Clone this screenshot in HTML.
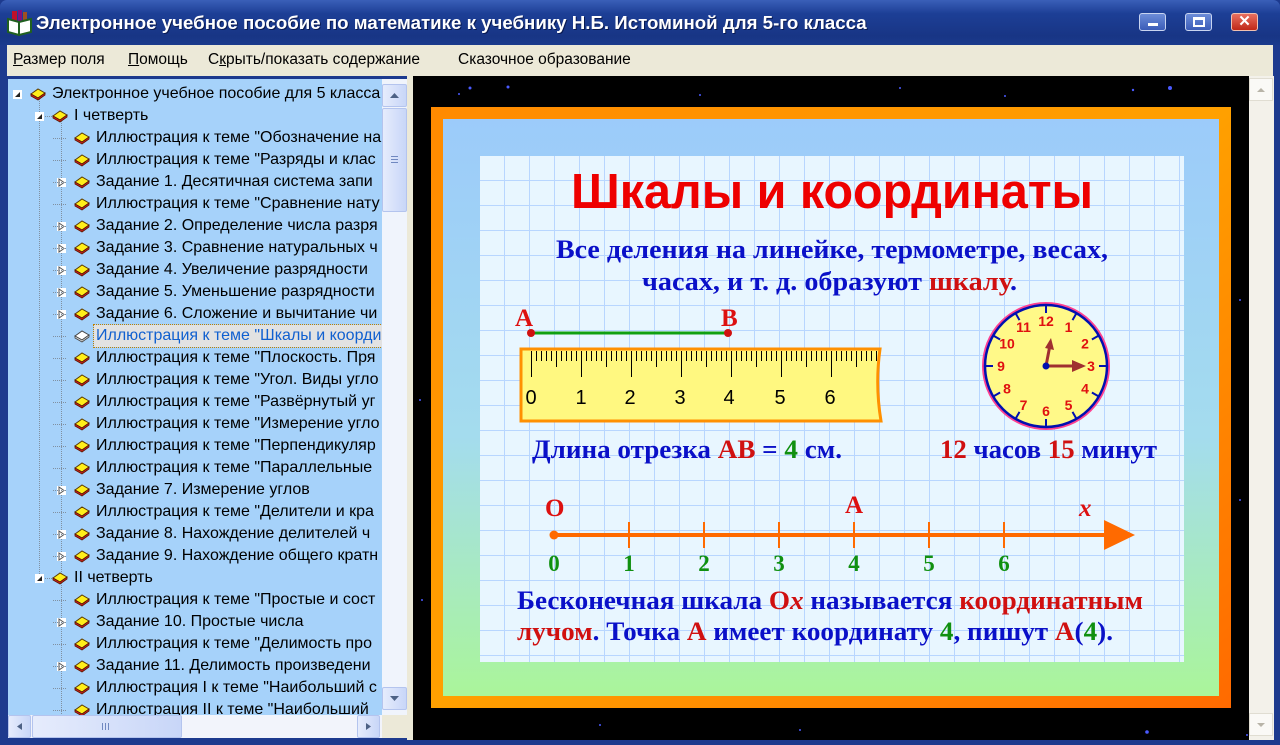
<!DOCTYPE html>
<html><head><meta charset="utf-8">
<style>
*{margin:0;padding:0;box-sizing:border-box}
body{width:1280px;height:745px;overflow:hidden;background:#1d3a8e;font-family:"Liberation Sans",sans-serif;position:relative}
.abs{position:absolute}
#title{left:0;top:0;width:1280px;height:45px;background:linear-gradient(#3a5fb8,#1d3f96 30%,#183585 80%,#1a3a8c);border-radius:7px 7px 0 0}
#title .t{left:36px;top:12px;color:#fff;font-weight:bold;font-size:18.7px;white-space:nowrap;text-shadow:1px 1px 0 #0a1a50}
.btn{top:13px;width:27px;height:18px;border:1px solid #c8d4f0;border-radius:3px;background:linear-gradient(#6c8cd8,#3b5cb8)}
#menu{left:7px;top:45px;width:1266px;height:31px;background:#ece9d8}
#menu span{position:absolute;top:6px;font-size:15.5px;color:#000}
#tree{left:8px;top:79px;width:374px;height:636px;background:#a6d2fa;overflow:hidden}
.r{position:absolute;height:22px;font-size:16px;white-space:nowrap;color:#000;line-height:22px}
.bk{position:absolute}
.ex{position:absolute;width:9px;height:9px;background:#fff;font-size:8px;line-height:9px;text-align:center;color:#333}
#vs{left:382px;top:79px;width:25px;height:636px;background:#f0f4fc}
#hs{left:8px;top:715px;width:399px;height:23px;background:#f2f4fb}
.sb{position:absolute;background:linear-gradient(90deg,#e6ecfc,#c8d6f8);border:1px solid #b4c4ee;border-radius:2px}
#split{left:407px;top:76px;width:6px;height:664px;background:#ece9d8}
#black{left:413px;top:76px;width:836px;height:664px;background:#000}
#rs{left:1249px;top:76px;width:25px;height:664px;background:#f3f1ea}
</style></head><body>
<div id="title" class="abs">
 <svg class="abs" style="left:7px;top:10px" width="26" height="26"><rect x="5" y="1" width="5" height="14" fill="#c0102a"/><rect x="11" y="0" width="4" height="15" fill="#801080"/><rect x="16" y="2" width="4" height="13" fill="#a05020"/><path d="M1 9 L12 12 L12 25 L1 22Z" fill="#fff" stroke="#206020" stroke-width="2"/><path d="M12 12 L24 9 L24 22 L12 25Z" fill="#fff" stroke="#206020" stroke-width="2"/></svg>
 <div class="abs t">Электронное учебное пособие по математике к учебнику Н.Б. Истоминой для 5-го класса</div>
 <div class="abs btn" style="left:1139px"><div class="abs" style="left:8px;top:9px;width:10px;height:3px;background:#fff"></div></div>
 <div class="abs btn" style="left:1185px"><div class="abs" style="left:7px;top:3px;width:12px;height:10px;border:2px solid #fff;border-top-width:3px"></div></div>
 <div class="abs btn" style="left:1231px;background:linear-gradient(#e87060,#c02818);border-color:#f0c0b0;color:#fff;font-weight:bold;font-size:15px;text-align:center;line-height:16px">✕</div>
</div>
<div id="menu" class="abs">
 <span style="left:6px"><u>Р</u>азмер поля</span>
 <span style="left:121px"><u>П</u>омощь</span>
 <span style="left:201px">С<u>к</u>рыть/показать содержание</span>
 <span style="left:451px">Сказочное образование</span>
</div>
<div id="tree" class="abs">
<svg class="abs" style="left:0;top:0" width="374" height="636">
<g stroke="#8090a0" stroke-dasharray="1 1" stroke-width="1">
<line x1="31.5" y1="20" x2="31.5" y2="500"/>
<line x1="53.5" y1="42" x2="53.5" y2="636"/>
<line x1="37" y1="37.5" x2="46" y2="37.5"/>
<line x1="37" y1="499.5" x2="46" y2="499.5"/>
</g></svg>
<div id="rows"></div>
</div>
<div id="vs" class="abs">
 <div class="sb" style="left:0;top:5px;width:25px;height:23px"><svg width="23" height="21"><path d="M7 13 L11.5 8 L16 13Z" fill="#4d6185"/></svg></div>
 <div class="sb" style="left:0;top:29px;width:25px;height:104px"><svg width="23" height="102"><g stroke="#7088c0"><line x1="8" y1="47.5" x2="15" y2="47.5"/><line x1="8" y1="50.5" x2="15" y2="50.5"/><line x1="8" y1="53.5" x2="15" y2="53.5"/></g></svg></div>
 <div class="sb" style="left:0;top:608px;width:25px;height:23px"><svg width="23" height="21"><path d="M7 8 L11.5 13 L16 8Z" fill="#4d6185"/></svg></div>
</div>
<div id="hs" class="abs">
 <div class="sb" style="left:0;top:0;width:23px;height:23px"><svg width="21" height="21"><path d="M13 7 L8 10.5 L13 14Z" fill="#4d6185"/></svg></div>
 <div class="sb" style="left:24px;top:0;width:150px;height:23px"><svg width="148" height="21"><g stroke="#7088c0"><line x1="69.5" y1="7" x2="69.5" y2="14"/><line x1="72.5" y1="7" x2="72.5" y2="14"/><line x1="75.5" y1="7" x2="75.5" y2="14"/></g></svg></div>
 <div class="sb" style="left:349px;top:0;width:23px;height:23px"><svg width="21" height="21"><path d="M8 7 L13 10.5 L8 14Z" fill="#4d6185"/></svg></div>
 <div class="abs" style="left:374px;top:0;width:25px;height:23px;background:#ece9d8"></div>
</div>
<div id="split" class="abs"></div>
<div id="black" class="abs"></div>
<div id="rs" class="abs">
 <div class="abs" style="left:0;top:2px;width:24px;height:23px;background:#faf9f6;border:1px solid #e0ddd2"><svg width="22" height="21"><path d="M7 13 L11 9 L15 13Z" fill="#b8b4a8"/></svg></div>
 <div class="abs" style="left:0;top:637px;width:24px;height:23px;background:#faf9f6;border:1px solid #e0ddd2"><svg width="22" height="21"><path d="M7 9 L11 13 L15 9Z" fill="#b8b4a8"/></svg></div>
</div>

<svg class="abs" style="left:0;top:0" width="1280" height="745">
<defs>
<linearGradient id="inner" x1="0" y1="0" x2="0" y2="1"><stop offset="0" stop-color="#9ccbfa"/><stop offset="0.55" stop-color="#a4dcee"/><stop offset="1" stop-color="#aaf59a"/></linearGradient>
<linearGradient id="og" x1="0" y1="0" x2="1" y2="1"><stop offset="0" stop-color="#ff8a00"/><stop offset="0.5" stop-color="#ffa000"/><stop offset="1" stop-color="#ff6a00"/></linearGradient>
<pattern id="grid" x="480" y="156" width="25" height="25" patternUnits="userSpaceOnUse"><rect width="25" height="25" fill="#e8f6ff"/><rect x="24" y="0" width="2" height="25" fill="#b8d6ff"/><rect x="0" y="24" width="25" height="2" fill="#b8d6ff"/></pattern>
</defs>
<g fill="#4a5aff">
<circle cx="470" cy="88" r="1.5"/><circle cx="508" cy="87" r="1.5"/><circle cx="459" cy="94" r="1"/><circle cx="1170" cy="88" r="2"/><circle cx="1133" cy="90" r="1.2"/><circle cx="700" cy="95" r="1"/><circle cx="900" cy="88" r="1"/><circle cx="1005" cy="96" r="1"/><circle cx="1147" cy="732" r="1.8"/><circle cx="1247" cy="735" r="1"/><circle cx="600" cy="725" r="1"/><circle cx="800" cy="730" r="1"/><circle cx="1240" cy="300" r="1"/><circle cx="1240" cy="500" r="1"/><circle cx="420" cy="400" r="1"/><circle cx="422" cy="600" r="1"/>
</g>
<rect x="431" y="107" width="800" height="601" fill="url(#og)"/>
<rect x="443" y="119" width="776" height="577" fill="url(#inner)"/>
<rect x="480" y="156" width="704" height="506" fill="url(#grid)"/>
<text x="832" y="208" font-family="Liberation Sans" font-weight="bold" font-size="49" fill="#ee0000" text-anchor="middle" textLength="522" lengthAdjust="spacingAndGlyphs">Шкалы и координаты</text>
<g font-family="Liberation Serif" font-weight="bold" font-size="26" fill="#0a10c8">
<text x="556" y="258" textLength="552" lengthAdjust="spacingAndGlyphs">Все деления на линейке, термометре, весах,</text>
<text x="642" y="290" textLength="375" lengthAdjust="spacingAndGlyphs">часах, и т. д. образуют <tspan fill="#d01010">шкалу</tspan>.</text>
<text x="532" y="458" textLength="310" lengthAdjust="spacingAndGlyphs">Длина отрезка <tspan fill="#d01010">АВ</tspan> = <tspan fill="#109010">4</tspan> см.</text>
<text x="940" y="458" textLength="217" lengthAdjust="spacingAndGlyphs"><tspan fill="#d01010">12</tspan> часов <tspan fill="#d01010">15</tspan> минут</text>
<text x="517" y="609" textLength="626" lengthAdjust="spacingAndGlyphs">Бесконечная шкала <tspan fill="#d01010">О<tspan font-style="italic">х</tspan></tspan> называется <tspan fill="#d01010">координатным</tspan></text>
<text x="517" y="640" textLength="596" lengthAdjust="spacingAndGlyphs"><tspan fill="#d01010">лучом</tspan>. Точка <tspan fill="#d01010">А</tspan> имеет координату <tspan fill="#109010">4</tspan>, пишут <tspan fill="#d01010">А</tspan>(<tspan fill="#109010">4</tspan>).</text>
</g>
<g font-family="Liberation Serif" font-weight="bold" font-size="25" fill="#dd1010">
<text x="515" y="326">A</text><text x="721" y="326">B</text>
<text x="545" y="516">O</text><text x="845" y="513">A</text><text x="1079" y="516" font-style="italic">x</text>
</g>
<line x1="531" y1="333" x2="728" y2="333" stroke="#10a010" stroke-width="3"/>
<circle cx="531" cy="333" r="4" fill="#d01010"/><circle cx="728" cy="333" r="4" fill="#d01010"/>
<path d="M521 349 H880 Q875 385 881 421 H521Z" fill="#fff880" stroke="#ff9000" stroke-width="3"/>
<g id="ticks" stroke="#000" stroke-width="1"></g>
<g font-family="Liberation Sans" font-size="20" fill="#000" text-anchor="middle">
<text x="531" y="404">0</text><text x="581" y="404">1</text><text x="630" y="404">2</text><text x="680" y="404">3</text><text x="729" y="404">4</text><text x="780" y="404">5</text><text x="830" y="404">6</text>
</g>
<circle cx="1046" cy="366" r="63" fill="#fff988" stroke="#ff4090" stroke-width="2"/>
<circle cx="1046" cy="366" r="61" fill="none" stroke="#0010b0" stroke-width="2.5"/>
<g id="cticks" stroke="#0010b0" stroke-width="2"></g>
<g id="cnum" font-family="Liberation Sans" font-weight="bold" font-size="14" fill="#e01010" text-anchor="middle"></g>
<line x1="1046" y1="366" x2="1050" y2="345" stroke="#a03030" stroke-width="3"/><path d="M1051 338 L1054 350 L1045 348Z" fill="#a03030"/>
<line x1="1046" y1="366" x2="1074" y2="366" stroke="#a03030" stroke-width="3"/><path d="M1086 366 L1072 360 L1072 372Z" fill="#a03030"/>
<circle cx="1046" cy="366" r="3.5" fill="#0010b0"/>
<line x1="554" y1="535" x2="1110" y2="535" stroke="#ff6a00" stroke-width="4"/>
<path d="M1135 535 L1104 520 L1104 550Z" fill="#ff6a00"/>
<circle cx="554" cy="535" r="4.5" fill="#ff6a00"/>
<g stroke="#ff6a00" stroke-width="2"><line x1="629" y1="522" x2="629" y2="548"/><line x1="704" y1="522" x2="704" y2="548"/><line x1="779" y1="522" x2="779" y2="548"/><line x1="854" y1="522" x2="854" y2="548"/><line x1="929" y1="522" x2="929" y2="548"/><line x1="1004" y1="522" x2="1004" y2="548"/></g>
<g font-family="Liberation Serif" font-weight="bold" font-size="23" fill="#109010" text-anchor="middle">
<text x="554" y="571">0</text><text x="629" y="571">1</text><text x="704" y="571">2</text><text x="779" y="571">3</text><text x="854" y="571">4</text><text x="929" y="571">5</text><text x="1004" y="571">6</text>
</g>
</svg>
<script>
var rows=[
[0,1,"Электронное учебное пособие для 5 класса"],
[1,1,"I четверть"],
[2,0,'Иллюстрация к теме "Обозначение на'],
[2,0,'Иллюстрация к теме "Разряды и клас'],
[2,2,'Задание 1. Десятичная система запи'],
[2,0,'Иллюстрация к теме "Сравнение нату'],
[2,2,'Задание 2. Определение числа разря'],
[2,2,'Задание 3. Сравнение натуральных ч'],
[2,2,'Задание 4. Увеличение разрядности'],
[2,2,'Задание 5. Уменьшение разрядности'],
[2,2,'Задание 6. Сложение и вычитание чи'],
[2,3,'Иллюстрация к теме "Шкалы и коорди'],
[2,0,'Иллюстрация к теме "Плоскость. Пря'],
[2,0,'Иллюстрация к теме "Угол. Виды угло'],
[2,0,'Иллюстрация к теме "Развёрнутый уг'],
[2,0,'Иллюстрация к теме "Измерение угло'],
[2,0,'Иллюстрация к теме "Перпендикуляр'],
[2,0,'Иллюстрация к теме "Параллельные'],
[2,2,'Задание 7. Измерение углов'],
[2,0,'Иллюстрация к теме "Делители и кра'],
[2,2,'Задание 8. Нахождение делителей ч'],
[2,2,'Задание 9. Нахождение общего кратн'],
[1,1,"II четверть"],
[2,0,'Иллюстрация к теме "Простые и сост'],
[2,2,'Задание 10. Простые числа'],
[2,0,'Иллюстрация к теме "Делимость про'],
[2,2,'Задание 11. Делимость произведени'],
[2,0,'Иллюстрация I к теме "Наибольший с'],
[2,0,'Иллюстрация II к теме "Наибольший']];
var h="";
rows.forEach(function(r,i){
 var lv=r[0],y=4+i*22,ix=30+lv*22-8;
 if(r[1]==1)h+='<div class="ex" style="left:'+(5+lv*22)+'px;top:'+(y+7)+'px;background:#fff"><svg width="9" height="9" style="display:block"><path d="M7 2 L7 7 L2 7Z" fill="#222"/></svg></div>';
 if(r[1]==2)h+='<div class="ex" style="left:'+(5+lv*22)+'px;top:'+(y+7)+'px"><svg width="9" height="9" style="display:block"><path d="M2 1 L7 4.5 L2 8Z" fill="none" stroke="#555"/></svg></div>';
 if(lv==2)h+='<svg class="abs" style="left:45px;top:'+(y+11)+'px" width="14" height="1"><line x1="0" y1="0.5" x2="14" y2="0.5" stroke="#8090a0" stroke-dasharray="1 1"/></svg>';
 var sel=r[1]==3;
 h+='<svg class="bk" style="left:'+(ix)+'px;top:'+(y+4)+'px" width="16" height="14"><path d="M1 7 L8 2 L15 6 L8 11Z" fill="'+(sel?'#fff':'#ffef1a')+'" stroke="'+(sel?'#444':'#5a3a00')+'"/><path d="M1 7 L1 9 L8 13 L15 8 L15 6 L8 11Z" fill="'+(sel?'#ddd':'#d02020')+'" stroke="'+(sel?'#444':'#5a1a00')+'" stroke-width="0.8"/></svg>';
 var tx=44+lv*22;
 if(sel)h+='<div class="r" style="left:'+(tx-2)+'px;top:'+y+'px;background:#e2e2e2;color:#1060d0;outline:1px dotted #c08000;padding:0 2px;width:400px">'+r[2].replace(/"/g,'&quot;')+'</div>';
 else h+='<div class="r" style="left:'+tx+'px;top:'+y+'px">'+r[2].replace(/"/g,'&quot;')+'</div>';
});
document.getElementById('rows').innerHTML=h;
var t="";
for(var m=0;m<=69;m++){var x=531+m*5,l=(m%10==0)?26:(m%5==0?16:10);t+='<line x1="'+(x+.5)+'" y1="351" x2="'+(x+.5)+'" y2="'+(351+l)+'"/>';}
document.getElementById('ticks').innerHTML=t;
var c="",n="";
for(var k=0;k<12;k++){var a=k*Math.PI/6,s=Math.sin(a),co=-Math.cos(a);
c+='<line x1="'+(1046+s*53)+'" y1="'+(366+co*53)+'" x2="'+(1046+s*61)+'" y2="'+(366+co*61)+'"/>';
n+='<text x="'+(1046+s*45)+'" y="'+(366+co*45+5)+'">'+(k==0?12:k)+'</text>';}
document.getElementById('cticks').innerHTML=c;document.getElementById('cnum').innerHTML=n;
</script>
</body></html>
